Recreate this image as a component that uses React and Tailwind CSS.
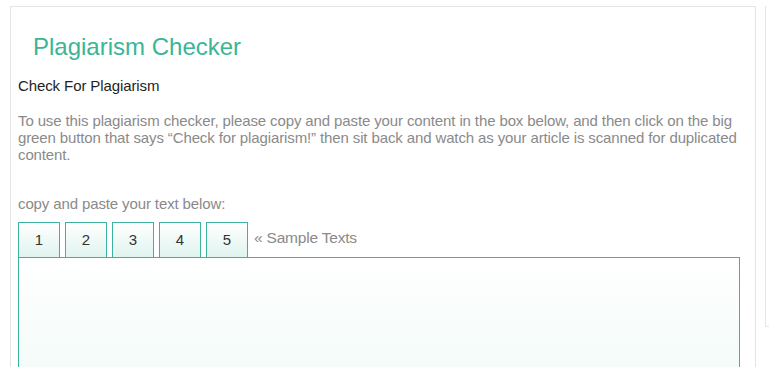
import React from 'react';

const tabs = ['1', '2', '3', '4', '5'];

export default function App() {
  return (
    <div className="min-h-screen bg-white flex items-start font-['Liberation_Sans',Arial,sans-serif]">
      {/* main panel */}
      <div className="ml-[10px] mt-[6px] w-[746px] h-[400px] border border-[#e4e4e4] pl-[7px]">
        <h1 className="mt-[26px] pl-[15px] text-[24px] leading-[28px] text-[#3bb595] font-normal">
          Plagiarism Checker
        </h1>
        <h2 className="mt-[15px] text-[15px] leading-[20px] text-[#1e1e1e] font-normal tracking-[-0.1px]">
          Check For Plagiarism
        </h2>
        <p className="mt-[16px] w-[722px] text-[15px] leading-[17px] text-[#8a8a8a] tracking-[-0.12px]">
          To use this plagiarism checker, please copy and paste your content in the box below, and then click on the big
          green button that says “Check for plagiarism!” then sit back and watch as your article is scanned for duplicated
          content.
        </p>
        <p className="mt-[32px] text-[15px] leading-[17px] text-[#8a8a8a] tracking-[-0.12px]">
          copy and paste your text below:
        </p>

        <div className="mt-[10px] flex items-start">
          {tabs.map((t) => (
            <button
              key={t}
              className="mr-[5px] w-[42px] h-[35px] border border-b-0 border-[#3bb39f] bg-gradient-to-b from-white to-[#dff4ef] flex items-center justify-center text-[15px] text-[#333]"
            >
              {t}
            </button>
          ))}
          <span className="ml-px pt-[6px] text-[15.5px] leading-[20px] text-[#8a8a8a] tracking-[-0.2px]">
            « Sample Texts
          </span>
        </div>
        <div className="w-[722px] h-[150px] border border-[#3bb39f] bg-gradient-to-b from-white to-[#f0faf7]"></div>
      </div>

      {/* side panel */}
      <div className="ml-[9px] mt-[6px] flex-1 h-[321px] border-l border-b border-[#e4e4e4]"></div>
    </div>
  );
}
